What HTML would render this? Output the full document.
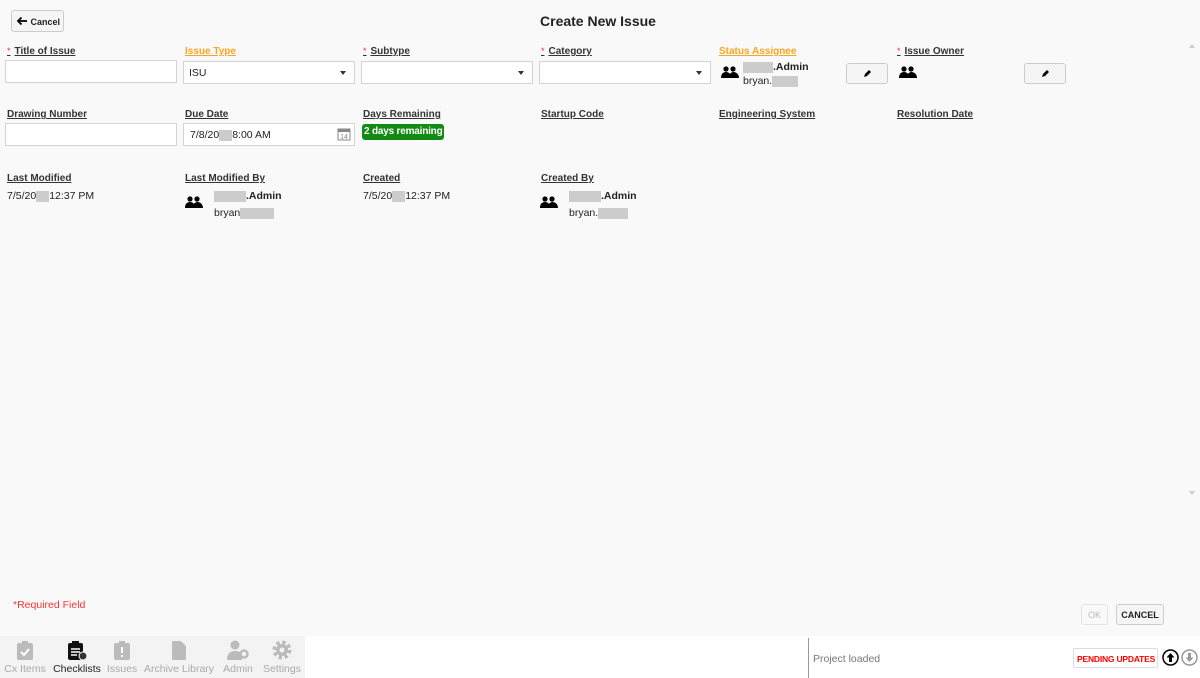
<!DOCTYPE html>
<html><head><style>
*{box-sizing:border-box;margin:0;padding:0}
body{width:1200px;height:678px;background:#f9f9f9;font-family:"Liberation Sans",sans-serif;font-size:10.5px;color:#222;position:relative;overflow:hidden}
.a{position:absolute;white-space:nowrap}
.lbl{position:absolute;font-weight:bold;text-decoration:underline;color:#333;font-size:10px;white-space:nowrap}
.or{color:#f5a623}
.req{color:#e33;font-weight:normal;text-decoration:none;margin-right:4px;font-size:9px;vertical-align:top}
.inp{position:absolute;background:#fff;border:1px solid #d3d3d3;height:23px;white-space:nowrap}
.sel::after{content:"";position:absolute;right:8px;top:9px;border-left:3px solid transparent;border-right:3px solid transparent;border-top:4px solid #333}
.txt{position:absolute;font-size:10.5px;white-space:nowrap}
.blur{display:inline-block;background:#ccc;height:11px;vertical-align:middle}
.btn{position:absolute;background:#f5f5f5;border:1px solid #ccc;border-radius:3px;white-space:nowrap}
.nav{position:absolute;top:636px;text-align:center;font-size:10.5px;color:#aaa;white-space:nowrap}
</style></head><body>
<div class="btn" style="left:11px;top:10px;width:53px;height:22px;font-weight:bold;font-size:9px;padding:5px 0 0 4px;"><svg width="12" height="10" viewBox="0 0 12 10" style="vertical-align:-1px"><path d="M11 5H2M5.5 1.5L2 5l3.5 3.5" stroke="#000" stroke-width="1.8" fill="none"/></svg> Cancel</div>
<div class="a" style="left:0;width:1196px;top:13px;text-align:center;font-weight:bold;font-size:14px">Create New Issue</div>

<div class="lbl" style="left:7px;top:46px"><span class="req">*</span>Title of Issue</div>
<div class="inp" style="left:5px;top:60px;width:172px"></div>
<div class="lbl or" style="left:185px;top:46px">Issue Type</div>
<div class="inp sel" style="left:183px;top:61px;width:172px;padding:5px 5px">ISU</div>
<div class="lbl" style="left:363px;top:46px"><span class="req">*</span>Subtype</div>
<div class="inp sel" style="left:361px;top:61px;width:172px"></div>
<div class="lbl" style="left:541px;top:46px"><span class="req">*</span>Category</div>
<div class="inp sel" style="left:539px;top:61px;width:172px"></div>
<div class="lbl or" style="left:719px;top:46px">Status Assignee</div>
<svg class="a" style="left:721px;top:66px" width="18" height="13" viewBox="0 0 18 13"><circle cx="5" cy="3" r="2.6"/><circle cx="12" cy="3" r="2.6"/><path d="M0 12c0-4 2-6 5-6s5 2 5 6zM8 12c0-4 2-6 4.5-6S18 8 18 12z"/></svg>
<div class="txt" style="left:743px;top:61px;font-weight:bold"><span class="blur" style="width:30px"></span>.Admin</div>
<div class="txt" style="left:743px;top:75px">bryan.<span class="blur" style="width:26px"></span></div>
<div class="btn" style="left:846px;top:63px;width:42px;height:21px"><svg class="a" style="left:16px;top:6px" width="8" height="8" viewBox="0 0 8 8"><path d="M1 7l1-3 4-4 2 2-4 4z"/></svg></div>
<div class="lbl" style="left:897px;top:46px"><span class="req">*</span>Issue Owner</div>
<svg class="a" style="left:899px;top:66px" width="18" height="13" viewBox="0 0 18 13"><circle cx="5" cy="3" r="2.6"/><circle cx="12" cy="3" r="2.6"/><path d="M0 12c0-4 2-6 5-6s5 2 5 6zM8 12c0-4 2-6 4.5-6S18 8 18 12z"/></svg>
<div class="btn" style="left:1024px;top:63px;width:42px;height:21px"><svg class="a" style="left:16px;top:6px" width="8" height="8" viewBox="0 0 8 8"><path d="M1 7l1-3 4-4 2 2-4 4z"/></svg></div>

<div class="lbl" style="left:7px;top:109px">Drawing Number</div>
<div class="inp" style="left:5px;top:123px;width:172px"></div>
<div class="lbl" style="left:185px;top:109px">Due Date</div>
<div class="inp" style="left:183px;top:123px;width:172px;padding:5px 6px">7/8/20<span class="blur" style="width:13px"></span>8:00 AM</div>
<svg class="a" style="left:337px;top:127px" width="14" height="14" viewBox="0 0 14 14"><rect x="1" y="2" width="12" height="11" fill="none" stroke="#888"/><rect x="1" y="2" width="12" height="3" fill="#888"/><text x="7" y="12" font-size="7" text-anchor="middle" fill="#888" font-family="Liberation Sans">14</text></svg>
<div class="lbl" style="left:363px;top:109px">Days Remaining</div>
<div class="a" style="left:362px;top:124px;width:82px;height:16px;background:#138a13;border-radius:3px;color:#fff;font-weight:bold;font-size:10px;padding:2px 2px;letter-spacing:-0.2px">2 days remaining</div>
<div class="lbl" style="left:541px;top:109px">Startup Code</div>
<div class="lbl" style="left:719px;top:109px">Engineering System</div>
<div class="lbl" style="left:897px;top:109px">Resolution Date</div>

<div class="lbl" style="left:7px;top:173px">Last Modified</div>
<div class="txt" style="left:7px;top:190px">7/5/20<span class="blur" style="width:13px"></span>12:37 PM</div>
<div class="lbl" style="left:185px;top:173px">Last Modified By</div>
<svg class="a" style="left:185px;top:196px" width="18" height="13" viewBox="0 0 18 13"><circle cx="5" cy="3" r="2.6"/><circle cx="12" cy="3" r="2.6"/><path d="M0 12c0-4 2-6 5-6s5 2 5 6zM8 12c0-4 2-6 4.5-6S18 8 18 12z"/></svg>
<div class="txt" style="left:214px;top:190px;font-weight:bold"><span class="blur" style="width:32px"></span>.Admin</div>
<div class="txt" style="left:214px;top:207px">bryan<span class="blur" style="width:34px"></span></div>
<div class="lbl" style="left:363px;top:173px">Created</div>
<div class="txt" style="left:363px;top:190px">7/5/20<span class="blur" style="width:13px"></span>12:37 PM</div>
<div class="lbl" style="left:541px;top:173px">Created By</div>
<svg class="a" style="left:540px;top:196px" width="18" height="13" viewBox="0 0 18 13"><circle cx="5" cy="3" r="2.6"/><circle cx="12" cy="3" r="2.6"/><path d="M0 12c0-4 2-6 5-6s5 2 5 6zM8 12c0-4 2-6 4.5-6S18 8 18 12z"/></svg>
<div class="txt" style="left:569px;top:190px;font-weight:bold"><span class="blur" style="width:32px"></span>.Admin</div>
<div class="txt" style="left:569px;top:207px">bryan.<span class="blur" style="width:30px"></span></div>

<div class="a" style="left:1189px;top:44px;border-left:3px solid transparent;border-right:3px solid transparent;border-bottom:4px solid #ccc"></div>
<div class="a" style="left:1189px;top:491px;border-left:3px solid transparent;border-right:3px solid transparent;border-top:4px solid #ccc"></div>

<div class="txt" style="left:13px;top:599px;color:#f33">*Required Field</div>
<div class="btn" style="left:1081px;top:604px;width:27px;height:21px;color:#bbb;font-size:9px;text-align:center;padding-top:5px;background:#f9f9f9;border-color:#e3e3e3">OK</div>
<div class="btn" style="left:1116px;top:604px;width:48px;height:21px;font-weight:bold;font-size:9px;text-align:center;padding-top:5px">CANCEL</div>

<div class="a" style="left:0;top:636px;width:305px;height:42px;background:#f3f3f3"></div>
<div class="a" style="left:305px;top:636px;width:895px;height:42px;background:#fff"></div>
<div class="a" style="left:808px;top:638px;width:1px;height:40px;background:#999"></div>
<div class="txt" style="left:813px;top:653px;color:#777">Project loaded</div>
<div class="a" style="left:1073px;top:648px;width:85px;height:20px;border:1px solid #ddd;border-radius:2px;color:#f00;font-weight:bold;font-size:8.5px;padding:5px 0 0 3px;letter-spacing:-0.2px">PENDING UPDATES</div>
<svg class="a" style="left:1162px;top:649px" width="17" height="17" viewBox="0 0 17 17"><circle cx="8.5" cy="8.5" r="7.5" fill="none" stroke="#000" stroke-width="1.5"/><path d="M8.5 4L4.5 8.5h2.5V13h3V8.5h2.5z"/></svg>
<svg class="a" style="left:1181px;top:649px" width="17" height="17" viewBox="0 0 17 17"><circle cx="8.5" cy="8.5" r="7.5" fill="none" stroke="#999" stroke-width="1.5"/><path d="M8.5 13L4.5 8.5h2.5V4h3v4.5h2.5z" fill="#999"/></svg>

<div class="nav" style="left:3px;width:44px"><svg width="18" height="20" viewBox="0 0 18 20" style="margin-top:4px"><rect x="1" y="3" width="16" height="17" rx="2" fill="#bbb"/><rect x="6" y="1" width="6" height="4" fill="#bbb"/><path d="M5 12l3 3 5-6" stroke="#fff" stroke-width="2" fill="none"/></svg><div>Cx Items</div></div>
<div class="nav" style="left:52px;width:50px;color:#222"><svg width="22" height="20" viewBox="0 0 22 20" style="margin-top:4px"><rect x="2" y="3" width="15" height="17" rx="2" fill="#111"/><rect x="6" y="1" width="7" height="4" fill="#111"/><path d="M5 9h9M5 12h9M5 15h6" stroke="#fff" stroke-width="1.5"/><circle cx="17" cy="16" r="4" fill="#333" stroke="#fff"/></svg><div>Checklists</div></div>
<div class="nav" style="left:104px;width:36px"><svg width="18" height="20" viewBox="0 0 18 20" style="margin-top:4px"><rect x="1" y="3" width="16" height="17" rx="2" fill="#bbb"/><rect x="6" y="1" width="6" height="4" fill="#bbb"/><path d="M9 7v6M9 15v2" stroke="#fff" stroke-width="2"/></svg><div>Issues</div></div>
<div class="nav" style="left:144px;width:70px"><svg width="16" height="20" viewBox="0 0 16 20" style="margin-top:4px"><path d="M1 1h9l5 5v14H1z" fill="#bbb"/></svg><div>Archive Library</div></div>
<div class="nav" style="left:220px;width:36px"><svg width="22" height="20" viewBox="0 0 22 20" style="margin-top:4px"><circle cx="8" cy="5" r="4.5" fill="#bbb"/><path d="M0 20c0-6 3-9 8-9s7 2 7 5v4z" fill="#bbb"/><circle cx="17" cy="14" r="3.5" fill="none" stroke="#bbb" stroke-width="2.5"/></svg><div>Admin</div></div>
<div class="nav" style="left:261px;width:42px"><svg width="20" height="20" viewBox="0 0 20 20" style="margin-top:4px"><circle cx="10" cy="10" r="7" fill="none" stroke="#bbb" stroke-width="5" stroke-dasharray="3 2.5"/><circle cx="10" cy="10" r="6" fill="#bbb"/><circle cx="10" cy="10" r="2.5" fill="#f3f3f3"/></svg><div>Settings</div></div>
</body></html>
